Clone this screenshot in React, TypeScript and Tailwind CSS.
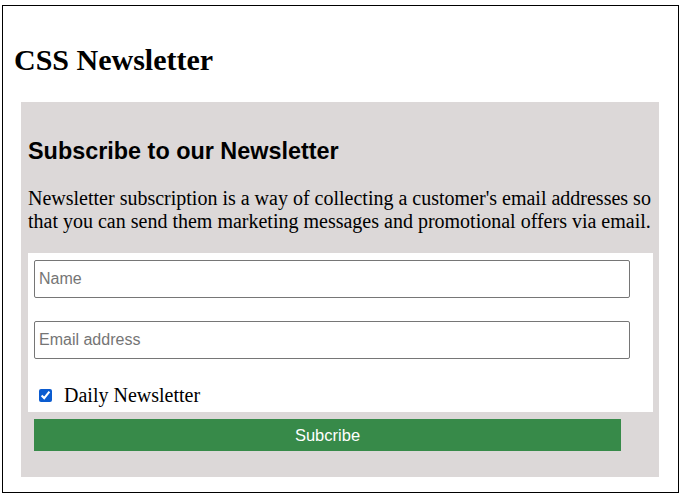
import { useState } from "react";

export default function App() {
  const [daily, setDaily] = useState(true);

  return (
    <div className="ml-[2px] mt-[5px] w-[677px] h-[488px] border border-black bg-white font-['Liberation_Serif',serif] text-black">
      <h1 className="mt-[37px] pl-[11px] text-[30px] leading-[34px] font-bold">
        CSS Newsletter
      </h1>

      {/* Newsletter box */}
      <div className="ml-[18px] mt-[25px] w-[638px] h-[375px] bg-[#dcd8d8] px-[7px] pt-[36px]">
        <h2 className="font-['Liberation_Sans',Arial,sans-serif] text-[23.4px] leading-[26px] font-bold">
          Subscribe to our Newsletter
        </h2>
        <p className="mt-[23px] text-[20px] leading-[23px]">
          Newsletter subscription is a way of collecting a customer's email
          addresses so that you can send them marketing messages and promotional
          offers via email.
        </p>

        <div className="mt-[20px] w-[625px] h-[159px] bg-white pt-[7px] pl-[6px]">
          <input
            type="text"
            placeholder="Name"
            className="block w-[596px] h-[38px] rounded-[2px] border border-[#767676] px-[4px] font-['Liberation_Sans',Arial,sans-serif] text-[16px] placeholder:text-[#757575] outline-none"
          />
          <input
            type="text"
            placeholder="Email address"
            className="mt-[23px] block w-[596px] h-[38px] rounded-[2px] border border-[#767676] px-[4px] font-['Liberation_Sans',Arial,sans-serif] text-[16px] placeholder:text-[#757575] outline-none"
          />
          <label className="mt-[25px] ml-[5px] flex items-center gap-[12px] text-[20px] leading-[23px]">
            <input
              type="checkbox"
              checked={daily}
              onChange={(e) => setDaily(e.target.checked)}
              className="w-[13px] h-[13px] accent-[#0b5cd0]"
            />
            Daily Newsletter
          </label>
        </div>

        <button className="mt-[7px] ml-[6px] block w-[587px] h-[32px] bg-[#378a49] text-white font-['Liberation_Sans',Arial,sans-serif] text-[16.5px]">
          Subcribe
        </button>
      </div>
    </div>
  );
}
